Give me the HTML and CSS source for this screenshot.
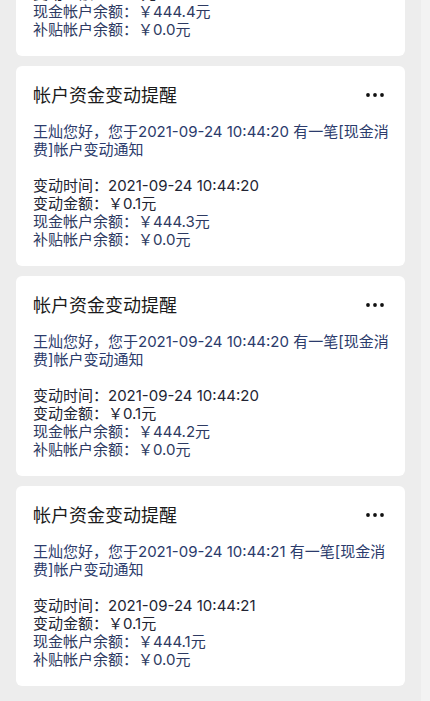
FILE: index.html
```html
<!DOCTYPE html>
<html lang="zh-CN">

<head>
    <meta charset="UTF-8">
    <meta name="viewport" content="width=device-width, initial-scale=1.0">
    <title>帐户资金变动提醒</title>
    <link rel="stylesheet" href="styles.css">
</head>

<body>
    <div class="page">
        <div class="list">
            <div class="card">
                <div class="card-head">
                    <span class="card-title">帐户资金变动提醒</span>
                    <svg class="more" width="20" height="6" viewBox="0 0 20 6"><circle cx="3" cy="3" r="1.9"/><circle cx="10" cy="3" r="1.9"/><circle cx="17" cy="3" r="1.9"/></svg>
                </div>
                <p class="greeting">王灿您好，您于2021-09-24 10:44:20 有一笔[现金消费]帐户变动通知</p>
                <div class="detail">
                    <div class="row">变动时间：2021-09-24 10:44:20</div>
                    <div class="row">变动金额：￥0.1元</div>
                    <div class="row blue">现金帐户余额：￥444.4元</div>
                    <div class="row blue">补贴帐户余额：￥0.0元</div>
                </div>
            </div>

            <div class="card">
                <div class="card-head">
                    <span class="card-title">帐户资金变动提醒</span>
                    <svg class="more" width="20" height="6" viewBox="0 0 20 6"><circle cx="3" cy="3" r="1.9"/><circle cx="10" cy="3" r="1.9"/><circle cx="17" cy="3" r="1.9"/></svg>
                </div>
                <p class="greeting">王灿您好，您于2021-09-24 10:44:20 有一笔[现金消费]帐户变动通知</p>
                <div class="detail">
                    <div class="row">变动时间：2021-09-24 10:44:20</div>
                    <div class="row">变动金额：￥0.1元</div>
                    <div class="row blue">现金帐户余额：￥444.3元</div>
                    <div class="row blue">补贴帐户余额：￥0.0元</div>
                </div>
            </div>

            <div class="card">
                <div class="card-head">
                    <span class="card-title">帐户资金变动提醒</span>
                    <svg class="more" width="20" height="6" viewBox="0 0 20 6"><circle cx="3" cy="3" r="1.9"/><circle cx="10" cy="3" r="1.9"/><circle cx="17" cy="3" r="1.9"/></svg>
                </div>
                <p class="greeting">王灿您好，您于2021-09-24 10:44:20 有一笔[现金消费]帐户变动通知</p>
                <div class="detail">
                    <div class="row">变动时间：2021-09-24 10:44:20</div>
                    <div class="row">变动金额：￥0.1元</div>
                    <div class="row blue">现金帐户余额：￥444.2元</div>
                    <div class="row blue">补贴帐户余额：￥0.0元</div>
                </div>
            </div>

            <div class="card">
                <div class="card-head">
                    <span class="card-title">帐户资金变动提醒</span>
                    <svg class="more" width="20" height="6" viewBox="0 0 20 6"><circle cx="3" cy="3" r="1.9"/><circle cx="10" cy="3" r="1.9"/><circle cx="17" cy="3" r="1.9"/></svg>
                </div>
                <p class="greeting">王灿您好，您于2021-09-24 10:44:21 有一笔[现金消费]帐户变动通知</p>
                <div class="detail">
                    <div class="row">变动时间：2021-09-24 10:44:21</div>
                    <div class="row">变动金额：￥0.1元</div>
                    <div class="row blue">现金帐户余额：￥444.1元</div>
                    <div class="row blue">补贴帐户余额：￥0.0元</div>
                </div>
            </div>
        </div>
        <div class="edge"></div>
    </div>
</body>

</html>
```

FILE: styles.css
```css
    html,
    body {
        margin: 0;
        height: 100%;
        overflow: hidden;
    }

    body {
        font-family: Inter, "Noto Sans CJK SC", sans-serif;
        background-color: #ededed;
        color: #1c1c1c;
    }

    .page {
        display: flex;
        height: 100%;
    }

    /* list is shown scrolled, the first card is half out of view */
    .list {
        flex: 1;
        display: flex;
        flex-direction: column;
        gap: 10px;
        padding: 0 16px;
        margin-top: -144px;
    }

    .edge {
        width: 9px;
        background-color: #f3f3f3;
    }

    .card {
        background-color: #fff;
        border-radius: 6px;
        padding: 18px 12px 17px 17px;
    }

    .card-head {
        display: flex;
        justify-content: space-between;
        align-items: center;
        height: 24px;
        padding-right: 8px;
    }

    .card-title {
        font-size: 18px;
        line-height: 24px;
        color: #1a1a1a;
    }

    .more {
        fill: #111;
        margin-top: -2px;
    }

    .greeting {
        margin: 15px 0 18px;
        font-size: 15px;
        line-height: 18px;
        color: #2b3b6c;
    }

    .row {
        font-size: 15px;
        line-height: 18px;
        color: #222433;
    }

    .row.blue {
        color: #2e3a62;
    }
```
